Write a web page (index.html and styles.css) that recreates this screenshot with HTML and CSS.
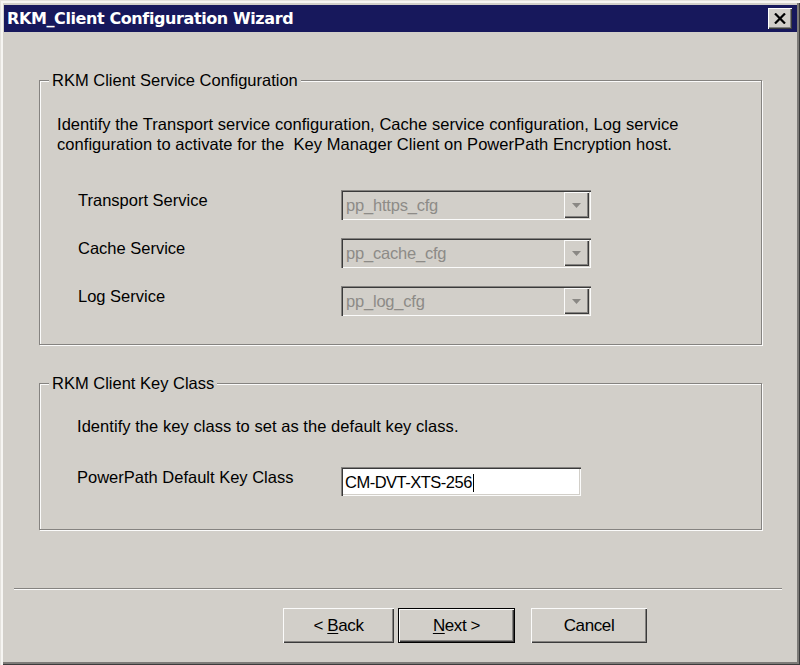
FILE: index.html
```html
<!DOCTYPE html>
<html>
<head>
<meta charset="utf-8">
<link rel="stylesheet" href="styles.css">
</head>
<body>
<div class="window">
  <div class="titlebar">
    <span class="title">RKM_Client Configuration Wizard</span>
    <span class="close"><svg width="12" height="11" viewBox="0 0 12 11"><path d="M1 0.5 L11 10.5 M11 0.5 L1 10.5" stroke="#000" stroke-width="2.2"/></svg></span>
  </div>
  <div class="body">
    <fieldset class="group g1">
      <legend>RKM Client Service Configuration</legend>
      <p class="desc">Identify the Transport service configuration, Cache service configuration, Log service<br>configuration to activate for the&nbsp; Key Manager Client on PowerPath Encryption host.</p>
      <div class="rows">
        <div class="row">
          <span class="label">Transport Service</span>
          <div class="combo"><span class="ctext">pp_https_cfg</span><span class="cbtn"><svg width="9" height="5" viewBox="0 0 9 5"><path d="M0 0 H9 L4.5 5 Z" fill="#8a8884"/></svg></span></div>
        </div>
        <div class="row">
          <span class="label">Cache Service</span>
          <div class="combo"><span class="ctext">pp_cache_cfg</span><span class="cbtn"><svg width="9" height="5" viewBox="0 0 9 5"><path d="M0 0 H9 L4.5 5 Z" fill="#8a8884"/></svg></span></div>
        </div>
        <div class="row">
          <span class="label">Log Service</span>
          <div class="combo"><span class="ctext">pp_log_cfg</span><span class="cbtn"><svg width="9" height="5" viewBox="0 0 9 5"><path d="M0 0 H9 L4.5 5 Z" fill="#8a8884"/></svg></span></div>
        </div>
      </div>
    </fieldset>
    <fieldset class="group g2">
      <legend>RKM Client Key Class</legend>
      <p class="desc desc2">Identify the key class to set as the default key class.</p>
      <div class="row row2">
        <span class="label">PowerPath Default Key Class</span>
        <div class="textbox"><span>CM-DVT-XTS-256</span><span class="caret"></span></div>
      </div>
    </fieldset>
    <div class="separator"></div>
    <div class="buttons">
      <div class="btn back"><span>&lt;&nbsp;<u>B</u>ack</span></div>
      <div class="btn next default"><span><u>N</u>ext&nbsp;&gt;</span></div>
      <div class="btn cancel"><span>Cancel</span></div>
    </div>
  </div>
</div>
</body>
</html>
```

FILE: styles.css
```css
html, body {
  margin: 0;
  padding: 0;
  background: #d2cfc9;
}
.window {
  width: 800px;
  height: 665px;
  box-sizing: border-box;
  padding: 5px 3px 3px 4px;
  background: #d2cfc9;
  box-shadow: inset 1px 1px 0 #e4e2dd, inset 3px 3px 0 #f6f5f2, inset -1px -1px 0 #3c3c3c, inset -3px -3px 0 #7d7b78;
  font-family: "Liberation Sans", Arial, sans-serif;
  font-size: 16.5px;
  color: #000;
  display: flex;
  flex-direction: column;
}
.titlebar {
  height: 27px;
  background: #17185c;
  display: flex;
  align-items: center;
  justify-content: space-between;
  padding: 0 5px 0 3px;
}
.title {
  color: #fff;
  font-weight: bold;
  font-size: 16px;
  font-family: "DejaVu Sans", Verdana, sans-serif;
  letter-spacing: -0.4px;
}
.close {
  width: 24px;
  height: 21px;
  box-sizing: border-box;
  background: #d2cfc9;
  box-shadow: inset 1px 1px 0 #fff, inset -1px -1px 0 #3c3c3c, inset -2px -2px 0 #808080;
  display: flex;
  align-items: center;
  justify-content: center;
}
.body {
  display: flex;
  flex-direction: column;
}
.group {
  margin: 0 35px;
  padding: 0;
  border: 1px solid #858380;
  box-shadow: 1px 1px 0 #fbfbfa, inset 1px 1px 0 #fbfbfa;
  min-width: 0;
}
.group legend {
  margin-left: 9px;
  padding: 0 3px;
  line-height: 18px;
  background: #d2cfc9;
}
.g1 { margin-top: 39px; padding-bottom: 28px; }
.g2 { margin-top: 29px; padding-bottom: 33px; }
.desc {
  margin: 25px 0 0 17px;
  line-height: 20px;
  letter-spacing: 0.05px;
}
.desc2 {
  margin: 24px 0 0 37px;
}
.rows {
  margin-top: 36px;
  display: flex;
  flex-direction: column;
  gap: 18px;
}
.row {
  display: flex;
  align-items: center;
  padding-left: 38px;
}
.row .label {
  width: 263px;
  margin-top: -9px;
}
.row2 {
  margin-top: 31px;
  padding-left: 37px;
}
.row2 .label { width: 264px; }
.combo {
  width: 250px;
  height: 30px;
  box-sizing: border-box;
  box-shadow: inset 1px 1px 0 #858380, inset 2px 2px 0 #3a3a3a, inset -1px -1px 0 #fbfbfa, inset -2px -2px 0 #d2cfc9;
  display: flex;
  align-items: center;
  justify-content: space-between;
  padding: 2px 2px 2px 5px;
}
.ctext {
  color: #8d8b87;
  letter-spacing: -0.2px;
}
.cbtn {
  width: 25px;
  height: 26px;
  box-sizing: border-box;
  box-shadow: inset 1px 1px 0 #fbfbfa, inset -1px -1px 0 #3a3a3a, inset -2px -2px 0 #858380;
  display: flex;
  align-items: center;
  justify-content: center;
  padding-top: 1px;
}
.textbox {
  width: 240px;
  height: 29px;
  box-sizing: border-box;
  background: #fff;
  box-shadow: inset 1px 1px 0 #858380, inset 2px 2px 0 #3a3a3a, inset -1px -1px 0 #fbfbfa, inset -2px -2px 0 #d2cfc9;
  display: flex;
  align-items: center;
  padding: 2px 4px 0 4px;
  letter-spacing: -0.5px;
}
.caret {
  display: inline-block;
  width: 1px;
  height: 18px;
  background: #000;
  margin-left: 1px;
}
.separator {
  margin: 58px 15px 0 10px;
  height: 1px;
  background: #858380;
  border-bottom: 1px solid #fbfbfa;
}
.buttons {
  margin-top: 18px;
  display: flex;
  padding-left: 279px;
}
.btn {
  height: 35px;
  box-sizing: border-box;
  display: flex;
  align-items: center;
  justify-content: center;
  background: #d2cfc9;
  box-shadow: inset 1px 1px 0 #fbfbfa, inset -1px -1px 0 #3a3a3a, inset -2px -2px 0 #858380;
  letter-spacing: -0.4px;
  font-size: 17px;
}
.back { width: 111px; }
.next { width: 117px; margin-left: 4px; }
.cancel { width: 116px; margin-left: 16px; }
.default {
  border: 1px solid #000;
}
u { text-underline-offset: 2px; }
```
